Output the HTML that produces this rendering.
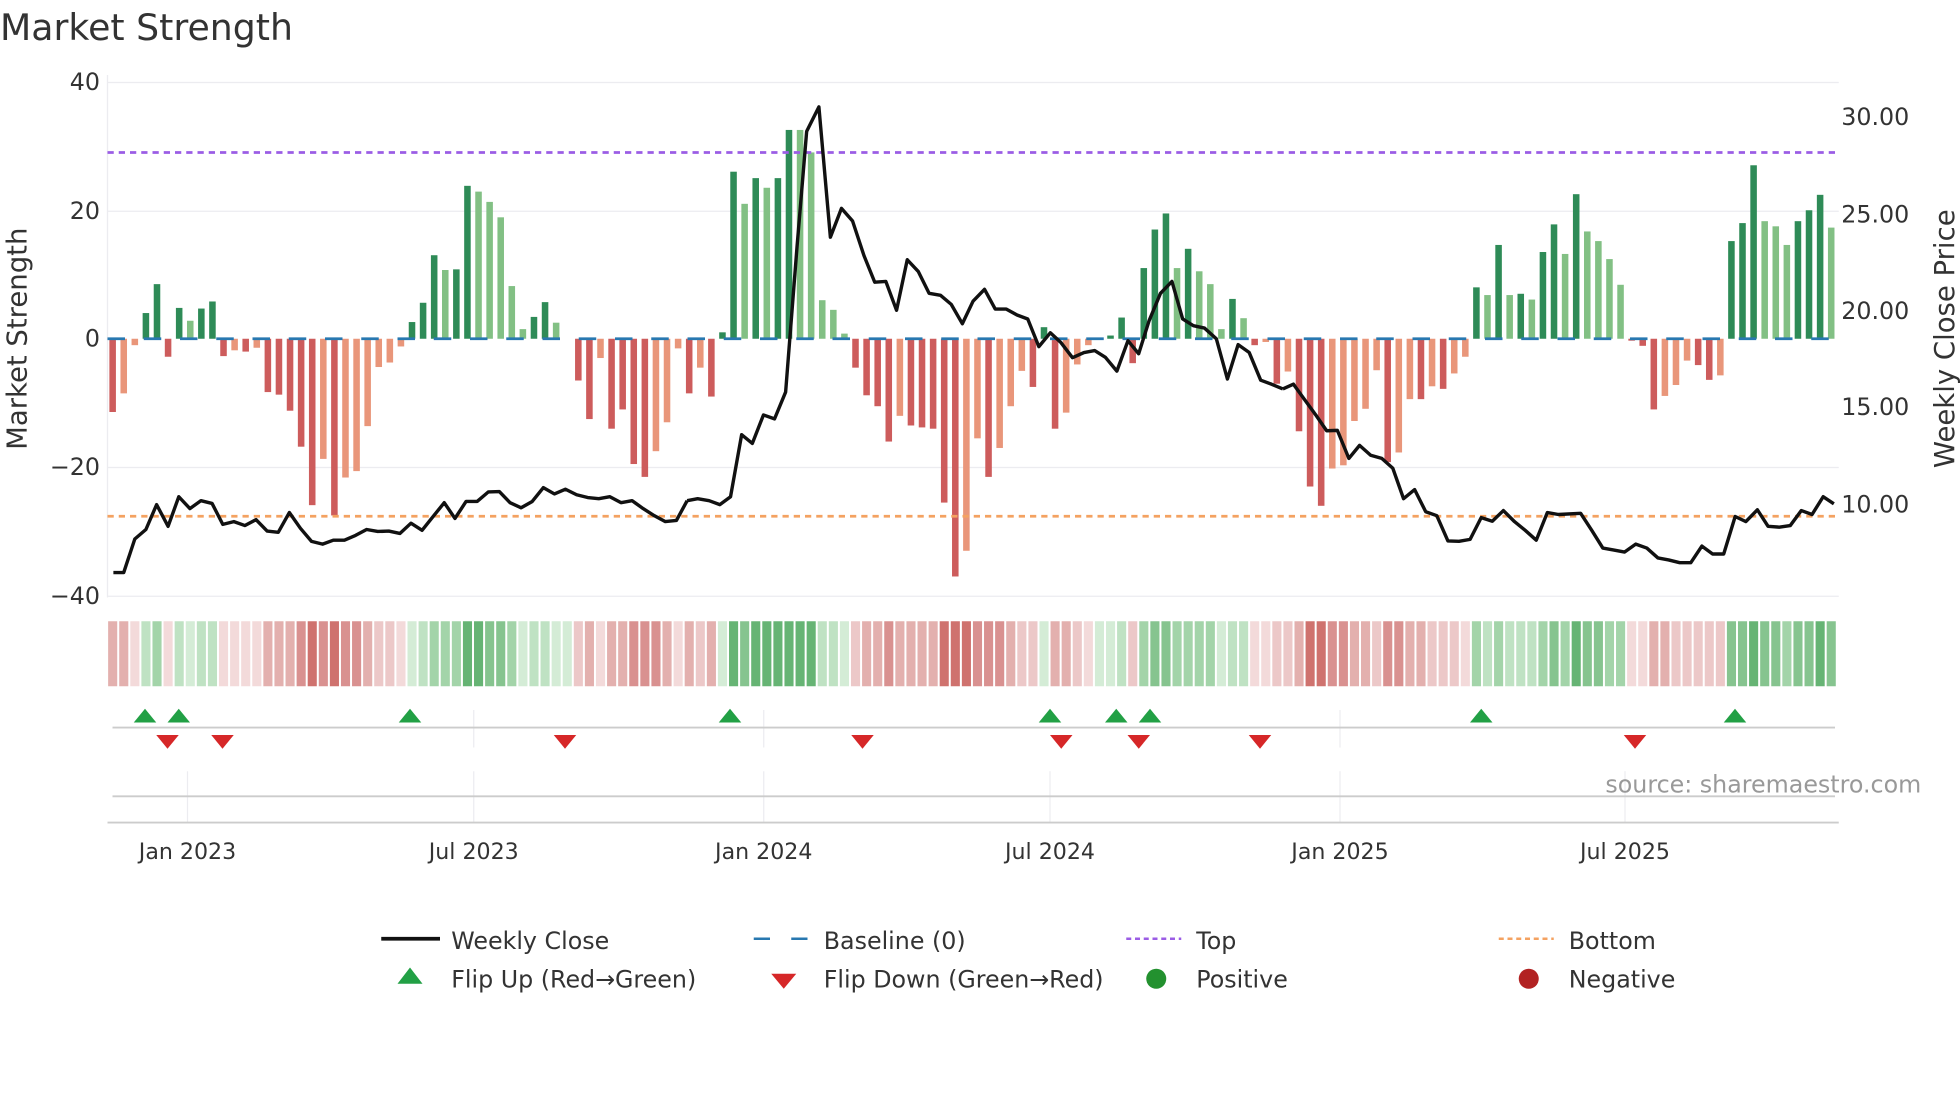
<!DOCTYPE html>
<html><head><meta charset="utf-8">
<style>
html,body{margin:0;padding:0;background:#fff;}
svg{display:block;font-family:"DejaVu Sans","Liberation Sans",sans-serif;}
.g1{fill:#d4ecd6}.g2{fill:#bfe2c3}.g3{fill:#a3d4a9}.g4{fill:#86c48f}.g5{fill:#66b474}
.r1{fill:#f3dada}.r2{fill:#ecc8c8}.r3{fill:#e3b0ae}.r4{fill:#d99190}.r5{fill:#cf726e}
</style></head>
<body>
<svg width="1960" height="1102" viewBox="0 0 1568 881.6" xmlns="http://www.w3.org/2000/svg">
<rect width="1568" height="882" fill="#fff"/>
<text x="0" y="32" font-size="29" fill="#333">Market Strength</text>
<g stroke="#ececf0" stroke-width="1">
<line x1="86" y1="66" x2="1471" y2="66"/>
<line x1="86" y1="169" x2="1471" y2="169"/>
<line x1="86" y1="374" x2="1471" y2="374"/>
<line x1="86" y1="477" x2="1471" y2="477"/>
<line x1="86" y1="60" x2="86" y2="478"/>
</g>
<g font-size="19" fill="#333" text-anchor="end">
<text x="80" y="72">40</text><text x="80" y="175">20</text><text x="80" y="277">0</text>
<text x="80" y="380">−20</text><text x="80" y="483">−40</text>
</g>
<g font-size="19" fill="#333">
<text x="1473" y="100">30.00</text><text x="1473" y="178">25.00</text><text x="1473" y="255">20.00</text>
<text x="1473" y="332">15.00</text><text x="1473" y="410">10.00</text>
</g>
<text transform="translate(21,271) rotate(-90)" font-size="22" fill="#333" text-anchor="middle">Market Strength</text>
<text transform="translate(1563,271) rotate(-90)" font-size="22" fill="#333" text-anchor="middle">Weekly Close Price</text>

<g transform="matrix(8.87 0 0 -5.14 87.5 271)">
<g fill="#2e8b57">
<rect x="3" y="0" width="0.59" height="4"/><rect x="4" y="0" width="0.59" height="8.5"/><rect x="6" y="0" width="0.59" height="4.8"/><rect x="8" y="0" width="0.59" height="4.7"/><rect x="9" y="0" width="0.59" height="5.8"/>
<rect x="27" y="0" width="0.59" height="2.6"/><rect x="28" y="0" width="0.59" height="5.6"/><rect x="29" y="0" width="0.59" height="13"/><rect x="31" y="0" width="0.59" height="10.8"/><rect x="32" y="0" width="0.59" height="23.8"/>
<rect x="38" y="0" width="0.59" height="3.4"/><rect x="39" y="0" width="0.59" height="5.7"/>
<rect x="55" y="0" width="0.59" height="1"/><rect x="56" y="0" width="0.59" height="26"/><rect x="58" y="0" width="0.59" height="25"/><rect x="60" y="0" width="0.59" height="25"/><rect x="61" y="0" width="0.59" height="32.5"/>
<rect x="84" y="0" width="0.59" height="1.8"/><rect x="90" y="0" width="0.59" height="0.5"/><rect x="91" y="0" width="0.59" height="3.3"/><rect x="93" y="0" width="0.59" height="11"/><rect x="94" y="0" width="0.59" height="17"/><rect x="95" y="0" width="0.59" height="19.5"/><rect x="97" y="0" width="0.59" height="14"/><rect x="101" y="0" width="0.59" height="6.2"/>
<rect x="123" y="0" width="0.59" height="8"/><rect x="125" y="0" width="0.59" height="14.6"/><rect x="127" y="0" width="0.59" height="7"/><rect x="129" y="0" width="0.59" height="13.5"/><rect x="130" y="0" width="0.59" height="17.8"/><rect x="132" y="0" width="0.59" height="22.5"/>
<rect x="146" y="0" width="0.59" height="15.2"/><rect x="147" y="0" width="0.59" height="18"/><rect x="148" y="0" width="0.59" height="27"/><rect x="152" y="0" width="0.59" height="18.3"/><rect x="153" y="0" width="0.59" height="20"/><rect x="154" y="0" width="0.59" height="22.4"/>
</g>
<g fill="#82c084">
<rect x="7" y="0" width="0.59" height="2.8"/><rect x="30" y="0" width="0.59" height="10.7"/><rect x="33" y="0" width="0.59" height="22.9"/><rect x="34" y="0" width="0.59" height="21.3"/><rect x="35" y="0" width="0.59" height="18.9"/><rect x="36" y="0" width="0.59" height="8.2"/><rect x="37" y="0" width="0.59" height="1.5"/><rect x="40" y="0" width="0.59" height="2.5"/>
<rect x="57" y="0" width="0.59" height="21"/><rect x="59" y="0" width="0.59" height="23.5"/><rect x="62" y="0" width="0.59" height="32.5"/><rect x="63" y="0" width="0.59" height="29"/><rect x="64" y="0" width="0.59" height="6"/><rect x="65" y="0" width="0.59" height="4.5"/><rect x="66" y="0" width="0.59" height="0.8"/>
<rect x="96" y="0" width="0.59" height="11"/><rect x="98" y="0" width="0.59" height="10.5"/><rect x="99" y="0" width="0.59" height="8.5"/><rect x="100" y="0" width="0.59" height="1.5"/><rect x="102" y="0" width="0.59" height="3.2"/>
<rect x="124" y="0" width="0.59" height="6.8"/><rect x="126" y="0" width="0.59" height="6.8"/><rect x="128" y="0" width="0.59" height="6.1"/><rect x="131" y="0" width="0.59" height="13.2"/><rect x="133" y="0" width="0.59" height="16.7"/><rect x="134" y="0" width="0.59" height="15.2"/><rect x="135" y="0" width="0.59" height="12.4"/><rect x="136" y="0" width="0.59" height="8.4"/>
<rect x="149" y="0" width="0.59" height="18.3"/><rect x="150" y="0" width="0.59" height="17.5"/><rect x="151" y="0" width="0.59" height="14.6"/><rect x="155" y="0" width="0.59" height="17.3"/>
</g>
<g fill="#cd5c5c">
<rect x="0" y="-11.4" width="0.59" height="11.4"/><rect x="5" y="-2.8" width="0.59" height="2.8"/><rect x="10" y="-2.7" width="0.59" height="2.7"/><rect x="12" y="-2" width="0.59" height="2"/>
<rect x="14" y="-8.3" width="0.59" height="8.3"/><rect x="15" y="-8.7" width="0.59" height="8.7"/><rect x="16" y="-11.2" width="0.59" height="11.2"/><rect x="17" y="-16.8" width="0.59" height="16.8"/><rect x="18" y="-25.9" width="0.59" height="25.9"/><rect x="20" y="-27.5" width="0.59" height="27.5"/>
<rect x="42" y="-6.5" width="0.59" height="6.5"/><rect x="43" y="-12.5" width="0.59" height="12.5"/><rect x="45" y="-14" width="0.59" height="14"/><rect x="46" y="-11" width="0.59" height="11"/><rect x="47" y="-19.5" width="0.59" height="19.5"/><rect x="48" y="-21.5" width="0.59" height="21.5"/><rect x="52" y="-8.5" width="0.59" height="8.5"/><rect x="54" y="-9" width="0.59" height="9"/>
<rect x="67" y="-4.5" width="0.59" height="4.5"/><rect x="68" y="-8.8" width="0.59" height="8.8"/><rect x="69" y="-10.5" width="0.59" height="10.5"/><rect x="70" y="-16" width="0.59" height="16"/><rect x="72" y="-13.5" width="0.59" height="13.5"/><rect x="73" y="-13.8" width="0.59" height="13.8"/><rect x="74" y="-14" width="0.59" height="14"/><rect x="75" y="-25.5" width="0.59" height="25.5"/><rect x="76" y="-37" width="0.59" height="37"/>
<rect x="79" y="-21.5" width="0.59" height="21.5"/><rect x="83" y="-7.5" width="0.59" height="7.5"/><rect x="85" y="-14" width="0.59" height="14"/><rect x="92" y="-3.8" width="0.59" height="3.8"/><rect x="103" y="-1" width="0.59" height="1"/>
<rect x="105" y="-7" width="0.59" height="7"/><rect x="107" y="-14.4" width="0.59" height="14.4"/><rect x="108" y="-23" width="0.59" height="23"/><rect x="109" y="-26" width="0.59" height="26"/><rect x="115" y="-19.2" width="0.59" height="19.2"/><rect x="118" y="-9.4" width="0.59" height="9.4"/><rect x="120" y="-7.8" width="0.59" height="7.8"/>
<rect x="137" y="-0.3" width="0.59" height="0.3"/><rect x="138" y="-1.1" width="0.59" height="1.1"/><rect x="139" y="-11" width="0.59" height="11"/><rect x="143" y="-4.1" width="0.59" height="4.1"/><rect x="144" y="-6.4" width="0.59" height="6.4"/>
</g>
<g fill="#e9967a">
<rect x="1" y="-8.5" width="0.59" height="8.5"/><rect x="2" y="-1" width="0.59" height="1"/><rect x="11" y="-1.8" width="0.59" height="1.8"/><rect x="13" y="-1.4" width="0.59" height="1.4"/><rect x="19" y="-18.7" width="0.59" height="18.7"/>
<rect x="21" y="-21.6" width="0.59" height="21.6"/><rect x="22" y="-20.6" width="0.59" height="20.6"/><rect x="23" y="-13.6" width="0.59" height="13.6"/><rect x="24" y="-4.4" width="0.59" height="4.4"/><rect x="25" y="-3.7" width="0.59" height="3.7"/><rect x="26" y="-1.2" width="0.59" height="1.2"/>
<rect x="44" y="-3" width="0.59" height="3"/><rect x="49" y="-17.5" width="0.59" height="17.5"/><rect x="50" y="-13" width="0.59" height="13"/><rect x="51" y="-1.5" width="0.59" height="1.5"/><rect x="53" y="-4.5" width="0.59" height="4.5"/>
<rect x="71" y="-12" width="0.59" height="12"/><rect x="77" y="-33" width="0.59" height="33"/><rect x="78" y="-15.5" width="0.59" height="15.5"/><rect x="80" y="-17" width="0.59" height="17"/><rect x="81" y="-10.5" width="0.59" height="10.5"/><rect x="82" y="-5" width="0.59" height="5"/>
<rect x="86" y="-11.5" width="0.59" height="11.5"/><rect x="87" y="-4" width="0.59" height="4"/><rect x="88" y="-1" width="0.59" height="1"/><rect x="104" y="-0.5" width="0.59" height="0.5"/><rect x="106" y="-5.1" width="0.59" height="5.1"/>
<rect x="110" y="-20.2" width="0.59" height="20.2"/><rect x="111" y="-19.7" width="0.59" height="19.7"/><rect x="112" y="-12.8" width="0.59" height="12.8"/><rect x="113" y="-10.9" width="0.59" height="10.9"/><rect x="114" y="-4.9" width="0.59" height="4.9"/><rect x="116" y="-17.7" width="0.59" height="17.7"/><rect x="117" y="-9.4" width="0.59" height="9.4"/>
<rect x="119" y="-7.4" width="0.59" height="7.4"/><rect x="121" y="-5.4" width="0.59" height="5.4"/><rect x="122" y="-2.8" width="0.59" height="2.8"/><rect x="140" y="-8.9" width="0.59" height="8.9"/><rect x="141" y="-7.2" width="0.59" height="7.2"/><rect x="142" y="-3.4" width="0.59" height="3.4"/><rect x="145" y="-5.7" width="0.59" height="5.7"/>
</g>
</g>

<line x1="86" y1="271" x2="1471" y2="271" stroke="#2878b0" stroke-width="2.2" stroke-dasharray="14 15"/>
<line x1="86" y1="122" x2="1471" y2="122" stroke="#9b5de5" stroke-width="2.2" stroke-dasharray="5 4"/>
<line x1="86" y1="413" x2="1471" y2="413" stroke="#f4a261" stroke-width="2.2" stroke-dasharray="5 4"/>

<g fill="none" stroke="#111" stroke-width="3.4" stroke-linejoin="round">
<polyline transform="matrix(0.306 0 0 0.316 80 64)" vector-effect="non-scaling-stroke" points="35,1247 62,1247 91,1162 120,1138 148,1075 178,1130 206,1055 235,1085 264,1065 293,1072 321,1125 350,1118 379,1128 408,1113 437,1142 466,1145 495,1095 524,1135 553,1168 582,1175 610,1165 639,1165 668,1153 697,1138 726,1143 755,1142 784,1148 813,1122 842,1140 871,1105 900,1070 928,1110 957,1067 986,1067 1015,1043 1044,1042 1072,1070 1101,1083 1130,1067 1159,1032 1188,1048 1217,1036 1246,1050 1275,1057 1304,1060 1333,1055 1362,1070 1391,1065 1420,1085 1449,1103 1478,1118 1507,1115 1535,1065"/>
<polyline transform="matrix(0.306 0 0 0.316 552 64)" vector-effect="non-scaling-stroke" points="-7.5,1065 20,1060 50,1065 78,1075 106,1055 135,898 163,920 192,848 221,858 250,790 280,420 305,130 337,68 367,398 396,325 425,357 455,445 483,512 512,510 540,583 568,455 597,485 625,540 655,545 683,568 712,617 740,560 770,530 798,580 827,580 855,595 883,605 912,675 942,640 970,665 1000,703 1030,690 1058,685 1086,702 1116,737 1145,660 1173,693 1200,610 1230,540 1260,510 1288,605 1316,622 1345,628 1376,655 1405,757 1433,670 1462,690 1492,760 1520,770 1550,782"/>
<polyline transform="matrix(0.306 0 0 0.316 1024 64)" vector-effect="non-scaling-stroke" points="7.5,782 35,770 65,810 95,850 122,888 150,887 180,958 208,925 237,950 266,958 295,983 323,1060 352,1037 381,1093 410,1103 439,1167 468,1168 497,1163 526,1108 555,1117 584,1090 613,1118 641,1140 670,1165 699,1095 728,1100 786,1097 815,1140 844,1185 873,1190 901,1195 930,1175 959,1185 988,1210 1016,1215 1045,1222 1074,1222 1103,1180 1131,1200 1160,1200 1190,1105 1218,1118 1248,1088 1276,1130 1305,1132 1334,1128 1363,1090 1391,1100 1420,1055 1448,1073"/>
</g>

<g transform="matrix(8.87 0 0 1 86.5 497)">
<rect class="r3" x="0" width="0.82" height="52"/><rect class="r3" x="1" width="0.82" height="52"/><rect class="r1" x="2" width="0.82" height="52"/><rect class="g2" x="3" width="0.82" height="52"/><rect class="g3" x="4" width="0.82" height="52"/><rect class="r1" x="5" width="0.82" height="52"/><rect class="g2" x="6" width="0.82" height="52"/><rect class="g1" x="7" width="0.82" height="52"/><rect class="g2" x="8" width="0.82" height="52"/><rect class="g2" x="9" width="0.82" height="52"/>
<rect class="r1" x="10" width="0.82" height="52"/><rect class="r1" x="11" width="0.82" height="52"/><rect class="r1" x="12" width="0.82" height="52"/><rect class="r1" x="13" width="0.82" height="52"/><rect class="r3" x="14" width="0.82" height="52"/><rect class="r3" x="15" width="0.82" height="52"/><rect class="r3" x="16" width="0.82" height="52"/><rect class="r4" x="17" width="0.82" height="52"/><rect class="r5" x="18" width="0.82" height="52"/><rect class="r4" x="19" width="0.82" height="52"/>
<rect class="r5" x="20" width="0.82" height="52"/><rect class="r4" x="21" width="0.82" height="52"/><rect class="r4" x="22" width="0.82" height="52"/><rect class="r3" x="23" width="0.82" height="52"/><rect class="r2" x="24" width="0.82" height="52"/><rect class="r2" x="25" width="0.82" height="52"/><rect class="r1" x="26" width="0.82" height="52"/><rect class="g1" x="27" width="0.82" height="52"/><rect class="g2" x="28" width="0.82" height="52"/><rect class="g3" x="29" width="0.82" height="52"/>
<rect class="g3" x="30" width="0.82" height="52"/><rect class="g3" x="31" width="0.82" height="52"/><rect class="g5" x="32" width="0.82" height="52"/><rect class="g5" x="33" width="0.82" height="52"/><rect class="g4" x="34" width="0.82" height="52"/><rect class="g4" x="35" width="0.82" height="52"/><rect class="g3" x="36" width="0.82" height="52"/><rect class="g1" x="37" width="0.82" height="52"/><rect class="g2" x="38" width="0.82" height="52"/><rect class="g2" x="39" width="0.82" height="52"/>
<rect class="g1" x="40" width="0.82" height="52"/><rect class="g1" x="41" width="0.82" height="52"/><rect class="r2" x="42" width="0.82" height="52"/><rect class="r3" x="43" width="0.82" height="52"/><rect class="r1" x="44" width="0.82" height="52"/><rect class="r3" x="45" width="0.82" height="52"/><rect class="r3" x="46" width="0.82" height="52"/><rect class="r4" x="47" width="0.82" height="52"/><rect class="r4" x="48" width="0.82" height="52"/><rect class="r4" x="49" width="0.82" height="52"/>
<rect class="r3" x="50" width="0.82" height="52"/><rect class="r1" x="51" width="0.82" height="52"/><rect class="r3" x="52" width="0.82" height="52"/><rect class="r2" x="53" width="0.82" height="52"/><rect class="r3" x="54" width="0.82" height="52"/><rect class="g1" x="55" width="0.82" height="52"/><rect class="g5" x="56" width="0.82" height="52"/><rect class="g4" x="57" width="0.82" height="52"/><rect class="g5" x="58" width="0.82" height="52"/><rect class="g5" x="59" width="0.82" height="52"/>
<rect class="g5" x="60" width="0.82" height="52"/><rect class="g5" x="61" width="0.82" height="52"/><rect class="g5" x="62" width="0.82" height="52"/><rect class="g5" x="63" width="0.82" height="52"/><rect class="g2" x="64" width="0.82" height="52"/><rect class="g2" x="65" width="0.82" height="52"/><rect class="g1" x="66" width="0.82" height="52"/><rect class="r2" x="67" width="0.82" height="52"/><rect class="r3" x="68" width="0.82" height="52"/><rect class="r3" x="69" width="0.82" height="52"/>
<rect class="r4" x="70" width="0.82" height="52"/><rect class="r3" x="71" width="0.82" height="52"/><rect class="r3" x="72" width="0.82" height="52"/><rect class="r3" x="73" width="0.82" height="52"/><rect class="r3" x="74" width="0.82" height="52"/><rect class="r5" x="75" width="0.82" height="52"/><rect class="r5" x="76" width="0.82" height="52"/><rect class="r5" x="77" width="0.82" height="52"/><rect class="r4" x="78" width="0.82" height="52"/><rect class="r4" x="79" width="0.82" height="52"/>
<rect class="r4" x="80" width="0.82" height="52"/><rect class="r3" x="81" width="0.82" height="52"/><rect class="r2" x="82" width="0.82" height="52"/><rect class="r2" x="83" width="0.82" height="52"/><rect class="g1" x="84" width="0.82" height="52"/><rect class="r3" x="85" width="0.82" height="52"/><rect class="r3" x="86" width="0.82" height="52"/><rect class="r2" x="87" width="0.82" height="52"/><rect class="r1" x="88" width="0.82" height="52"/><rect class="g1" x="89" width="0.82" height="52"/>
<rect class="g1" x="90" width="0.82" height="52"/><rect class="g2" x="91" width="0.82" height="52"/><rect class="r2" x="92" width="0.82" height="52"/><rect class="g3" x="93" width="0.82" height="52"/><rect class="g4" x="94" width="0.82" height="52"/><rect class="g4" x="95" width="0.82" height="52"/><rect class="g3" x="96" width="0.82" height="52"/><rect class="g3" x="97" width="0.82" height="52"/><rect class="g3" x="98" width="0.82" height="52"/><rect class="g3" x="99" width="0.82" height="52"/>
<rect class="g1" x="100" width="0.82" height="52"/><rect class="g2" x="101" width="0.82" height="52"/><rect class="g2" x="102" width="0.82" height="52"/><rect class="r1" x="103" width="0.82" height="52"/><rect class="r1" x="104" width="0.82" height="52"/><rect class="r2" x="105" width="0.82" height="52"/><rect class="r2" x="106" width="0.82" height="52"/><rect class="r3" x="107" width="0.82" height="52"/><rect class="r5" x="108" width="0.82" height="52"/><rect class="r5" x="109" width="0.82" height="52"/>
<rect class="r4" x="110" width="0.82" height="52"/><rect class="r4" x="111" width="0.82" height="52"/><rect class="r3" x="112" width="0.82" height="52"/><rect class="r3" x="113" width="0.82" height="52"/><rect class="r2" x="114" width="0.82" height="52"/><rect class="r4" x="115" width="0.82" height="52"/><rect class="r4" x="116" width="0.82" height="52"/><rect class="r3" x="117" width="0.82" height="52"/><rect class="r3" x="118" width="0.82" height="52"/><rect class="r2" x="119" width="0.82" height="52"/>
<rect class="r2" x="120" width="0.82" height="52"/><rect class="r2" x="121" width="0.82" height="52"/><rect class="r1" x="122" width="0.82" height="52"/><rect class="g3" x="123" width="0.82" height="52"/><rect class="g2" x="124" width="0.82" height="52"/><rect class="g3" x="125" width="0.82" height="52"/><rect class="g2" x="126" width="0.82" height="52"/><rect class="g2" x="127" width="0.82" height="52"/><rect class="g2" x="128" width="0.82" height="52"/><rect class="g3" x="129" width="0.82" height="52"/>
<rect class="g4" x="130" width="0.82" height="52"/><rect class="g3" x="131" width="0.82" height="52"/><rect class="g5" x="132" width="0.82" height="52"/><rect class="g4" x="133" width="0.82" height="52"/><rect class="g4" x="134" width="0.82" height="52"/><rect class="g3" x="135" width="0.82" height="52"/><rect class="g3" x="136" width="0.82" height="52"/><rect class="r1" x="137" width="0.82" height="52"/><rect class="r1" x="138" width="0.82" height="52"/><rect class="r3" x="139" width="0.82" height="52"/>
<rect class="r3" x="140" width="0.82" height="52"/><rect class="r2" x="141" width="0.82" height="52"/><rect class="r2" x="142" width="0.82" height="52"/><rect class="r2" x="143" width="0.82" height="52"/><rect class="r2" x="144" width="0.82" height="52"/><rect class="r2" x="145" width="0.82" height="52"/><rect class="g4" x="146" width="0.82" height="52"/><rect class="g4" x="147" width="0.82" height="52"/><rect class="g5" x="148" width="0.82" height="52"/><rect class="g4" x="149" width="0.82" height="52"/>
<rect class="g4" x="150" width="0.82" height="52"/><rect class="g3" x="151" width="0.82" height="52"/><rect class="g4" x="152" width="0.82" height="52"/><rect class="g4" x="153" width="0.82" height="52"/><rect class="g5" x="154" width="0.82" height="52"/><rect class="g4" x="155" width="0.82" height="52"/>
</g>

<g stroke="#ececf0" stroke-width="1">
<line x1="150" y1="617" x2="150" y2="658"/><line x1="379" y1="568" x2="379" y2="598"/><line x1="379" y1="617" x2="379" y2="658"/>
<line x1="611" y1="568" x2="611" y2="598"/><line x1="611" y1="617" x2="611" y2="658"/>
<line x1="840" y1="617" x2="840" y2="658"/><line x1="1072" y1="568" x2="1072" y2="598"/><line x1="1072" y1="617" x2="1072" y2="658"/>
<line x1="1300" y1="617" x2="1300" y2="658"/>
</g>
<line x1="90" y1="582" x2="1468" y2="582" stroke="#ccc" stroke-width="1.5"/>
<line x1="90" y1="637" x2="1468" y2="637" stroke="#ccc" stroke-width="1.5"/>
<line x1="86" y1="658" x2="1471" y2="658" stroke="#ccc" stroke-width="1.5"/>
<g fill="#22a045">
<polygon points="116,567 125,578 107,578"/><polygon points="143,567 152,578 134,578"/><polygon points="328,567 337,578 319,578"/>
<polygon points="584,567 593,578 575,578"/><polygon points="840,567 849,578 831,578"/><polygon points="893,567 902,578 884,578"/>
<polygon points="920,567 929,578 911,578"/><polygon points="1185,567 1194,578 1176,578"/><polygon points="1388,567 1397,578 1379,578"/>
</g>
<g fill="#d62728">
<polygon points="125,588 143,588 134,599"/><polygon points="169,588 187,588 178,599"/><polygon points="443,588 461,588 452,599"/>
<polygon points="681,588 699,588 690,599"/><polygon points="840,588 858,588 849,599"/><polygon points="902,588 920,588 911,599"/>
<polygon points="999,588 1017,588 1008,599"/><polygon points="1299,588 1317,588 1308,599"/>
</g>
<text x="1537" y="634" font-size="19" fill="#999" text-anchor="end">source: sharemaestro.com</text>
<g font-size="17.7" fill="#333" text-anchor="middle">
<text x="150" y="687">Jan 2023</text><text x="379" y="687">Jul 2023</text><text x="611" y="687">Jan 2024</text>
<text x="840" y="687">Jul 2024</text><text x="1072" y="687">Jan 2025</text><text x="1300" y="687">Jul 2025</text>
</g>
<g font-size="19" fill="#333">
<line x1="305" y1="751" x2="352" y2="751" stroke="#111" stroke-width="3"/>
<text x="361" y="759">Weekly Close</text>
<line x1="603" y1="751" x2="646" y2="751" stroke="#2878b0" stroke-width="2" stroke-dasharray="13 17"/>
<text x="659" y="759">Baseline (0)</text>
<line x1="901" y1="751" x2="945" y2="751" stroke="#9b5de5" stroke-width="2" stroke-dasharray="4 3"/>
<text x="957" y="759">Top</text>
<line x1="1199" y1="751" x2="1243" y2="751" stroke="#f4a261" stroke-width="2" stroke-dasharray="4 3"/>
<text x="1255" y="759">Bottom</text>
<polygon points="328,774 338,787 318,787" fill="#22a045"/>
<text x="361" y="790">Flip Up (Red→Green)</text>
<polygon points="617,779 637,779 627,791" fill="#d62728"/>
<text x="659" y="790">Flip Down (Green→Red)</text>
<circle cx="925" cy="783" r="8" fill="#23912f"/>
<text x="957" y="790">Positive</text>
<circle cx="1223" cy="783" r="8" fill="#b22222"/>
<text x="1255" y="790">Negative</text>
</g>
</svg>
</body></html>
